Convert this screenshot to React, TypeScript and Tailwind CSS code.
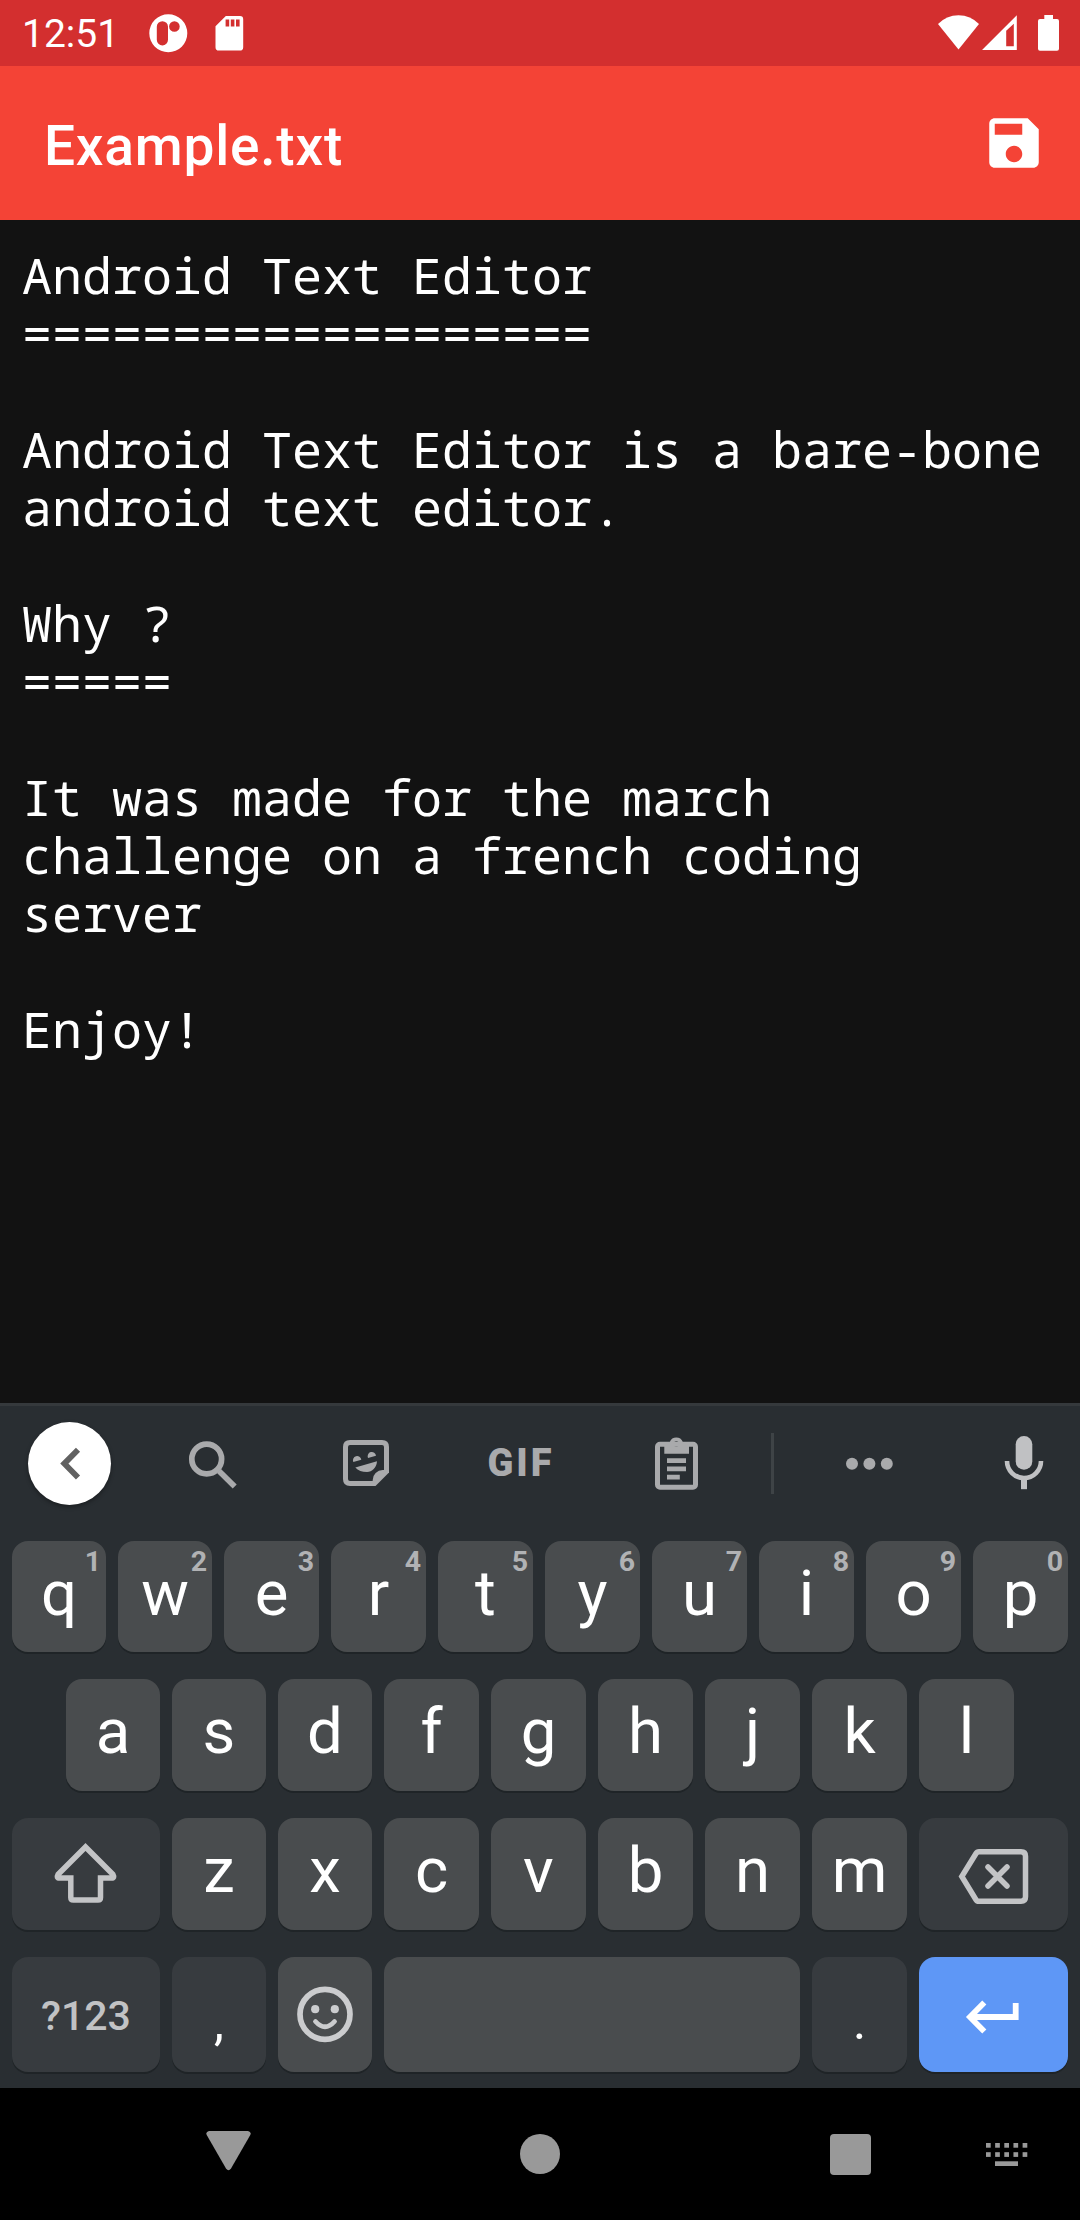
import type { ReactNode } from 'react';

const documentText = `Android Text Editor
===================

Android Text Editor is a bare-bone
android text editor.

Why ?
=====

It was made for the march
challenge on a french coding
server

Enjoy!`;

function StatusBar() {
  return (
    <header className="flex h-[66px] items-start bg-[#d32f2f] text-white">
      <span className="ml-[22px] w-[125px] text-[39px] leading-[69px]">12:51</span>
      <svg className="h-[66px] w-[42px]" viewBox="0 0 42 66" fill="white">
        <path
          fillRule="evenodd"
          d="M21.3 14.3a19 19 0 1 1 0 38a19 19 0 1 1 0-38zM15.4 21.2a5.6 5.6 0 0 0-5.6 5.6v13a5.6 5.6 0 0 0 11.2 0v-13a5.6 5.6 0 0 0-5.6-5.6zM27.4 21.2a5.3 5.3 0 1 0 0 10.6a5.3 5.3 0 1 0 0-10.6z"
        />
      </svg>
      <svg className="ml-[24px] h-[66px] w-[32px]" viewBox="0 0 32 66" fill="white">
        <path
          fillRule="evenodd"
          d="M12.8 16H27a3.2 3.2 0 0 1 3.2 3.2V47.2a3.4 3.4 0 0 1-3.4 3.4H5.9a3.4 3.4 0 0 1-3.4-3.4V26.3zM12.6 19.6v7h3.6v-7zM17.8 19.6v7h3.6v-7zM23 19.6v7h3.6v-7z"
        />
      </svg>
      <svg className="ml-auto h-[66px] w-[42px]" viewBox="0 0 42 66" fill="white">
        <path d="M1 24Q9.5 15.2 21.5 15.2T42 24L21.5 49.5z" />
      </svg>
      <svg className="ml-[3px] h-[66px] w-[36px]" viewBox="0 0 36 66" fill="white">
        <path fillRule="evenodd" d="M0 50L34.8 15.3V50zM24.2 30.8V46.2H31.8V23.8z" />
      </svg>
      <svg className="mr-[20px] ml-[18px] h-[66px] w-[24px]" viewBox="0 0 24 66" fill="white">
        <path d="M8.3 15H17v4h4a2 2 0 0 1 2 2V48.7a2 2 0 0 1-2 2H4a2 2 0 0 1-2-2V21a2 2 0 0 1 2-2h4.3z" />
      </svg>
    </header>
  );
}

function AppBar() {
  return (
    <div className="flex h-[154px] items-center justify-between bg-[#f44336] pr-[33px] pl-[44px] text-white">
      <h1 className="pt-[6px] text-[55px] leading-none font-medium tracking-[0.8px]">Example.txt</h1>
      <svg className="size-[66px]" viewBox="0 0 24 24" fill="white">
        <path d="M17 3H5c-1.11 0-2 .9-2 2v14c0 1.1.89 2 2 2h14c1.1 0 2-.9 2-2V7l-4-4zm-5 16c-1.66 0-3-1.34-3-3s1.34-3 3-3 3 1.34 3 3-1.34 3-3 3zm3-10H5V5h10v4z" />
      </svg>
    </div>
  );
}

function KeyboardToolbar() {
  return (
    <div className="flex h-[114px] items-center pl-[28px]">
      <div className="size-[83px] rounded-full bg-white shadow-[0_2px_4px_rgba(0,0,0,0.35)]">
        <svg className="size-[83px]" viewBox="0 0 83 83" fill="none" stroke="#616161" strokeWidth="5.8">
          <path d="M50 27.7L36.3 41.6L50 55.5" />
        </svg>
      </div>
      <svg className="ml-[72px] size-[60px]" viewBox="0 0 60 60" fill="none" stroke="#a9aaac" strokeWidth="5.7">
        <circle cx="23.7" cy="26" r="14.9" />
        <path d="M36 38L51.7 53.5" />
      </svg>
      <svg className="ml-[93px] size-[60px]" viewBox="0 0 60 60" fill="#a9aaac">
        <path
          d="M38.5 50.5H14q-4.5 0-4.5-4.5V14q0-4.5 4.5-4.5H46q4.5 0 4.5 4.5V38.5"
          fill="none"
          stroke="#a9aaac"
          strokeWidth="5"
        />
        <path d="M53 39.5L39.5 53H36.7V47a10 10 0 0 1 10-10H53z" />
        <path d="M17.3 29a4.2 4.2 0 1 1 8-2.3zM32 24.9a4.2 4.2 0 1 1 8-2.2z" />
        <path d="M19.3 34.5L41 28.3C40.5 35 36 39 31 39C26 39 22 37.5 19.3 34.5z" />
      </svg>
      <span className="ml-[84px] w-[80px] pl-[2px] text-center text-[38px] leading-none font-black tracking-[3px] text-[#a9aaac]">
        GIF
      </span>
      <svg className="ml-[86px] size-[60px]" viewBox="0 0 60 60" fill="#a9aaac">
        <rect x="11.5" y="11.2" width="38" height="43" rx="2.5" fill="none" stroke="#a9aaac" strokeWidth="5" />
        <path
          fillRule="evenodd"
          d="M18.3 9H23.8a7 7 0 0 1 13 0H43V20.7H18.3zM30.3 8.3a2.7 2.7 0 1 0 0 5.4a2.7 2.7 0 1 0 0-5.4z"
        />
        <path d="M21 25.3h19v4.8H21zM21 33.5h19v4.8H21zM21 41.7h12.8v4.8H21z" />
      </svg>
      <span className="ml-[65px] h-[61px] w-[3px] bg-[#3e4346]" />
      <svg className="ml-[66px] size-[60px]" viewBox="0 0 60 60" fill="#a9aaac">
        <circle cx="12" cy="30.7" r="6" />
        <circle cx="29.4" cy="30.7" r="6" />
        <circle cx="46.8" cy="30.7" r="6" />
      </svg>
      <svg className="ml-[94px] size-[60px]" viewBox="0 0 60 60" fill="#c0c1c3">
        <rect x="21.7" y="3" width="16.6" height="33.7" rx="8.3" />
        <path d="M13 28A17 17 0 0 0 47 28" fill="none" stroke="#c0c1c3" strokeWidth="4.6" />
        <path d="M27 44h6v12.2h-6z" />
      </svg>
    </div>
  );
}

const keyBase = 'flex justify-center rounded-[16px] shadow-[0_2px_0_#1f2427]';

const narrowLetters = 'qwasdzx';

function LetterKey({ letter, hint }: { letter: string; hint?: string }) {
  const width = narrowLetters.includes(letter) ? 'w-[94px]' : 'w-[95px]';
  return (
    <div className={`${keyBase} relative h-full bg-[#494c4e] ${width}`}>
      <span className="text-[63.5px] leading-[105px] text-white">{letter}</span>
      {hint && (
        <span className="absolute top-[6px] right-[5px] text-[28.5px] leading-[29px] font-bold text-[#b1b2b4]">
          {hint}
        </span>
      )}
    </div>
  );
}

function KeyRow({ className, children }: { className: string; children: ReactNode }) {
  return <div className={`flex justify-center gap-3 px-3 ${className}`}>{children}</div>;
}

function Keyboard() {
  return (
    <section className="flex h-[685px] flex-col border-t-[3px] border-[#35393c] bg-[#292e32]">
      <KeyboardToolbar />
      <KeyRow className="mt-[21px] h-[111px]">
        {'qwertyuiop'.split('').map((letter, i) => (
          <LetterKey key={letter} letter={letter} hint={String((i + 1) % 10)} />
        ))}
      </KeyRow>
      <KeyRow className="mt-[27px] h-[112px]">
        {'asdfghjkl'.split('').map((letter) => (
          <LetterKey key={letter} letter={letter} />
        ))}
      </KeyRow>
      <KeyRow className="mt-[27px] h-[112px]">
        <div className={`${keyBase} w-[148px] items-center bg-[#373b3f]`}>
          <svg className="size-[66px]" viewBox="0 0 66 66" fill="none" stroke="#c3c4c6" strokeWidth="5.5">
            <path d="M32.5 6L5 33.5Q3 37 6.5 37H17.8V56.5Q17.8 59 20.3 59H45Q47.5 59 47.5 56.5V37H58.5Q62 37 60 33.5z" />
          </svg>
        </div>
        {'zxcvbnm'.split('').map((letter) => (
          <LetterKey key={letter} letter={letter} />
        ))}
        <div className={`${keyBase} w-[149px] items-center bg-[#373b3f]`}>
          <svg className="h-[66px] w-[78px]" viewBox="0 0 78 66" fill="none" stroke="#c3c4c6" strokeWidth="5.5">
            <path d="M24 10.8H66Q70.5 10.8 70.5 15.3V55.8Q70.5 60.3 66 60.3H24Q22 60.3 21 58.7L6.8 35.5L21 12.5Q22 10.8 24 10.8z" />
            <path d="M33 26L52 45M52 26L33 45" strokeLinecap="round" />
          </svg>
        </div>
      </KeyRow>
      <KeyRow className="mt-[27px] h-[115px]">
        <div className={`${keyBase} w-[148px] bg-[#373b3f]`}>
          <span className="text-[41px] leading-[118px] font-medium text-[#c1c2c4]">?123</span>
        </div>
        <div className={`${keyBase} w-[94px] bg-[#373b3f]`}>
          <span className="text-[50px] leading-[131px] text-white">,</span>
        </div>
        <div className={`${keyBase} w-[94px] items-center bg-[#494c4e]`}>
          <svg className="size-[60px]" viewBox="0 0 60 60" fill="none" stroke="#cbccce">
            <circle cx="30" cy="29.3" r="25" strokeWidth="5.7" />
            <circle cx="20.2" cy="24.2" r="4.1" fill="#cbccce" stroke="none" />
            <circle cx="39.8" cy="24.2" r="4.1" fill="#cbccce" stroke="none" />
            <path d="M20.5 36.5Q30 47 39.5 36.5" strokeWidth="4.8" strokeLinecap="round" />
          </svg>
        </div>
        <div className={`${keyBase} w-[416px] bg-[#494c4e]`} />
        <div className={`${keyBase} w-[95px] bg-[#373b3f]`}>
          <span className="text-[50px] leading-[131px] text-white">.</span>
        </div>
        <div className={`${keyBase} w-[149px] items-center bg-[#5e97f6]`}>
          <svg className="size-[60px]" viewBox="0 0 60 60" fill="none" stroke="white" strokeWidth="5.8">
            <path d="M51.7 18V32H7M20.3 17.5L6 32L20.3 46.5" />
          </svg>
        </div>
      </KeyRow>
    </section>
  );
}

function NavigationBar() {
  return (
    <nav className="flex h-[132px] items-center bg-black pl-[206px]">
      <svg className="h-[60px] w-[45px]" viewBox="0 0 45 60" fill="#999">
        <path d="M3 7H42Q46 8 44 11.5L25 44.5Q22.5 48 20 44.5L1 11.5Q-1 8 3 7z" />
      </svg>
      <span className="ml-[269px] size-[40px] rounded-full bg-[#999]" />
      <span className="ml-[270px] size-[41px] rounded-[4px] bg-[#999]" />
      <svg className="ml-[115px] h-[60px] w-[42px]" viewBox="0 0 42 60" fill="#999">
        {[0, 9.15, 18.3, 27.45, 36.6].map((x) => (
          <g key={x}>
            <rect x={x} y="19" width="4.7" height="4.7" />
            <rect x={x} y="28.2" width="4.7" height="4.7" />
          </g>
        ))}
        <rect x="9" y="37.3" width="23" height="4.7" />
      </svg>
    </nav>
  );
}

export default function App() {
  return (
    <div className="flex h-[2220px] w-[1080px] flex-col overflow-hidden bg-[#121212] font-['Roboto',sans-serif]">
      <StatusBar />
      <AppBar />
      <main className="flex-1 pt-[26px] pl-[22px]">
        <pre className="font-['Droid_Sans_Mono','Noto_Sans_Mono','DejaVu_Sans_Mono',monospace] text-[50px] leading-[58px] text-white">
          {documentText}
        </pre>
      </main>
      <Keyboard />
      <NavigationBar />
    </div>
  );
}
